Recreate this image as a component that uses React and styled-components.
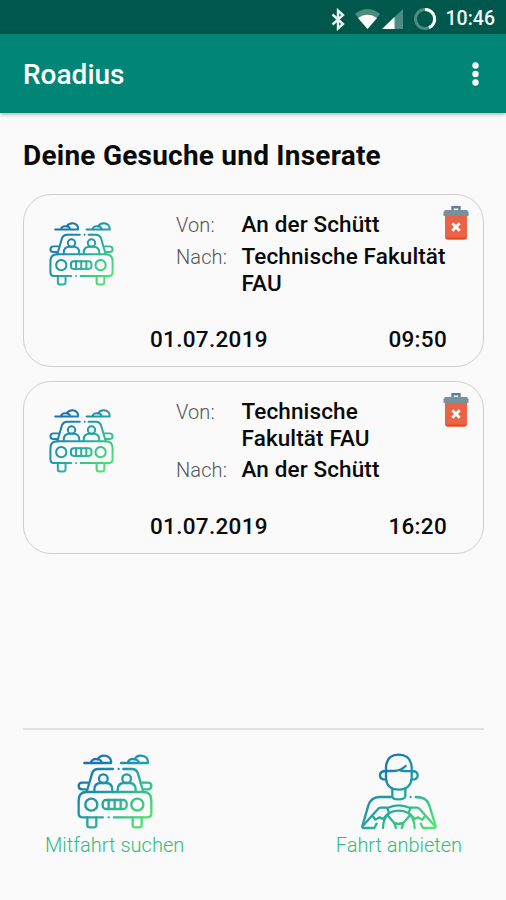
import styled, { createGlobalStyle } from 'styled-components';

const GlobalStyle = createGlobalStyle`
    * { box-sizing: border-box; }
    body {
        margin: 0;
        background: #fafafa;
        font-family: Roboto, "Liberation Sans", sans-serif;
        color: #0a0a0a;
    }
`

const Screen = styled.div`
    display: flex;
    flex-direction: column;
    width: 506px;
    height: 900px;
    overflow: hidden;
    background: #fafafa;
`

const StatusBar = styled.div`
    display: flex;
    flex: none;
    justify-content: flex-end;
    align-items: center;
    height: 34px;
    padding: 3px 11px 0 0;
    background: #00574b;
`

const Clock = styled.span`
    margin-left: 8px;
    font-size: 19.5px;
    font-weight: 500;
    line-height: 24px;
    color: #f2f7f6;
`

const Toolbar = styled.header`
    display: flex;
    flex: none;
    justify-content: space-between;
    align-items: center;
    height: 79px;
    padding: 1px 27px 0 23px;
    background: #008577;
    box-shadow: 0 1px 4px rgba(0, 0, 0, 0.35);
`

const AppName = styled.h1`
    margin: 2px 0 0;
    font-size: 28px;
    font-weight: 500;
    line-height: 34px;
    color: #fff;
`

const MenuButton = styled.button`
    display: flex;
    padding: 0;
    border: 0;
    background: none;
`

const Content = styled.main`
    display: flex;
    flex: 1;
    flex-direction: column;
    padding: 26px 22px 0 23px;
`

const Title = styled.h2`
    margin: 0 0 21px;
    font-size: 28px;
    font-weight: 700;
    line-height: 34px;
    letter-spacing: 0.23px;
    white-space: nowrap;
`

const Card = styled.article`
    display: flex;
    flex: none;
    height: 173px;
    margin-bottom: 14px;
    padding: 16px 14px 0 25px;
    border: 1.5px solid #cfcfcf;
    border-radius: 28px;
`

const CardIcon = styled.div`
    flex: none;
    width: 101px;
    padding-top: 10px;
`

const CardBody = styled.div`
    display: flex;
    flex: 1;
    flex-direction: column;
    justify-content: space-between;
    height: 142px;
`

const Route = styled.dl`
    display: grid;
    grid-template-columns: 65.5px 208px;
    align-items: baseline;
    row-gap: 4px;
    margin: 0 0 0 26px;
    line-height: 27px;
`

const Label = styled.dt`
    font-size: 20px;
    font-weight: 300;
    letter-spacing: 0.1px;
    color: #555;
`

const Place = styled.dd`
    margin: 0;
    font-size: 22.5px;
    font-weight: 500;
    letter-spacing: 0.12px;
    white-space: pre-line;
`

const Schedule = styled.div`
    display: flex;
    justify-content: space-between;
    padding-right: 22px;
    font-size: 22.5px;
    font-weight: 500;
    line-height: 28px;
    letter-spacing: 0.3px;
`

const DeleteButton = styled.button`
    align-self: flex-start;
    display: flex;
    flex: none;
    margin: -6px 0 0 -26px;
    padding: 0;
    border: 0;
    background: none;
`

const Actions = styled.nav`
    display: flex;
    justify-content: space-between;
    height: 172px;
    margin-top: auto;
    padding: 23px 22px 0;
    border-top: 2px solid #e0e0e0;
`

const Action = styled.button`
    display: flex;
    flex-direction: column;
    align-items: center;
    gap: 2px;
    padding: 0;
    border: 0;
    background: none;
    font-family: inherit;
    font-size: 20px;
    font-weight: 300;
    line-height: 28px;
    letter-spacing: ${(props) => props.$spacing};
    color: #2fbd80;
`

const LineIcon = styled.svg`
    display: block;
    width: ${(props) => props.$size}px;
    height: ${(props) => props.$size}px;
    overflow: visible;
    fill: none;
    stroke-width: 7;
    stroke-linecap: round;
    stroke-linejoin: round;
`

const Gradient = ({id, x1, y1, x2, y2}) => (
    <linearGradient id={id} gradientUnits="userSpaceOnUse" x1={x1} y1={y1} x2={x2} y2={y2}>
        <stop offset="0" stopColor="#1769b3" />
        <stop offset="0.5" stopColor="#20a0a5" />
        <stop offset="1" stopColor="#4fe36f" />
    </linearGradient>
)

const CarIcon = ({id, size}) => (
    <LineIcon $size={size} viewBox="36 24 228 228" stroke={`url(#${id})`}>
        <Gradient id={id} x1="60" y1="40" x2="240" y2="230" />
        <path d="M58 54H138C140 43 132 32 118 32C108 32 102 36 98 43C88 40 80 44 78 53M98 43C103 43 107 45 109 49" />
        <path d="M168 54H249C250 42 243 32 228 32C218 32 212 36 209 43C198 40 190 44 189 53M209 43C214 43 218 45 220 49" />
        <path d="M144 72H99Q87 72 82 83L65 141M175 72H201Q213 72 218 83L235 141M161 72h.1" />
        <circle cx="115" cy="101" r="13" />
        <circle cx="185" cy="101" r="13" />
        <path d="M88 141V134Q88 114 108 114H122Q142 114 142 134V141M158 141V134Q158 114 178 114H192Q212 114 212 134V141" />
        <path d="M68 113H52Q41 113 41 123Q41 133 52 133H63M232 113H248Q259 113 259 123Q259 133 248 133H237" />
        <path d="M114 217H52Q41 217 41 205V166Q41 141 65 141H235Q259 141 259 166V205Q259 217 247 217H147M131 217h.1" />
        <circle cx="79" cy="179" r="18" />
        <circle cx="217" cy="179" r="18" />
        <rect x="113" y="165" width="72" height="27" rx="10" />
        <path d="M131 165V192M149 165V192M167 165V192" />
        <path d="M67 217V239Q67 247 75 247H86Q94 247 94 239V217M203 217V239Q203 247 211 247H222Q230 247 230 239V217" />
    </LineIcon>
)

const DriverIcon = ({size}) => (
    <LineIcon $size={size} viewBox="32 24 228 228" stroke="url(#driver)">
        <Gradient id="driver" x1="75" y1="35" x2="240" y2="245" />
        <path d="M107 78V66Q109 29 145 29Q181 29 184 66V99Q181 134 145 134Q109 134 107 99V78H131Q153 76 166 63M148 75Q154 79 184 78" />
        <path d="M107 78Q89 78 89 91Q89 104 107 104M184 78Q202 78 202 91Q202 104 184 104" />
        <path d="M126 130V155Q128 163 145 163Q162 163 165 155V130" />
        <path d="M123 156H87Q62 157 54 181L36 243Q34 249 41 249H72L79 236M196 156Q230 156 237 181L256 243Q257 249 250 249H218L211 236M181 156h.1" />
        <path d="M38 242L83 192Q86 188 92 188H110L116 203L98 222L88 217L75 224L69 216M253 242L208 192Q205 188 199 188H181L175 203L193 222L203 217L216 224L222 216" />
        <path d="M111 189Q145 173 180 189M117 204Q145 190 174 204" />
        <path d="M98 249Q98 221 117 204M193 249Q193 221 174 204" />
        <path d="M112 211L131 233L145 237L160 233L179 211M131 233L137 249M160 233L154 249" />
    </LineIcon>
)

const TrashIcon = () => (
    <svg width="26" height="36" viewBox="0 0 26 36">
        <path d="M9.500 6V2.200H16.500V6" fill="none" stroke="#62818d" strokeWidth="2.400" />
        <path d="M2 5H24L25.500 7V11H.5V7Z" fill="#78929c" />
        <path d="M2 11H24V32Q24 34.500 21.500 34.500H4.500Q2 34.500 2 32Z" fill="#eb6346" />
        <path d="M2.500 32.500Q3 34.500 4.500 34.500H21.500Q23 34.500 23.500 32.500Z" fill="#e64a22" />
        <path d="M9.300 18.300L16.700 25.700M16.700 18.300L9.300 25.700" stroke="#fff" strokeWidth="2.800" />
    </svg>
)

const StatusIcons = () => (
    <svg width="108" height="24" viewBox="330 5 108 24">
        <path d="M332.500 12.500L343 22L338 26.500V8.500L343 13L332.500 22.500" fill="none" stroke="#e8f1ef" strokeWidth="2.400" />
        <path d="M355 12Q367.500 2 380 12L367.500 27Z" fill="#4e8b82" />
        <path d="M358 16Q367.500 9.500 377 16L367.500 27Z" fill="#fff" />
        <path d="M403 7V27H382Z" fill="#4e8b82" />
        <path d="M394.500 15V27H382Z" fill="#fff" />
        <circle cx="425" cy="17" r="9.500" fill="none" stroke="#4e8b82" strokeWidth="3" />
        <path d="M425 7.500A9.500 9.500 0 0 1 429 25.700" fill="none" stroke="#fff" strokeWidth="3" />
    </svg>
)

const rides = [
    { id: 'hin', from: 'An der Schütt', to: 'Technische Fakultät\nFAU', date: '01.07.2019', time: '09:50' },
    { id: 'rueck', from: 'Technische\nFakultät FAU', to: 'An der Schütt', date: '01.07.2019', time: '16:20' },
]

const RideCard = ({ride}) => (
    <Card>
        <CardIcon>
            <CarIcon id={`car-${ride.id}`} size={65} />
        </CardIcon>
        <CardBody>
            <Route>
                <Label>Von:</Label>
                <Place>{ride.from}</Place>
                <Label>Nach:</Label>
                <Place>{ride.to}</Place>
            </Route>
            <Schedule>
                <span>{ride.date}</span>
                <span>{ride.time}</span>
            </Schedule>
        </CardBody>
        <DeleteButton aria-label="Löschen">
            <TrashIcon />
        </DeleteButton>
    </Card>
)

const App = () => {
    return (
        <Screen>
            <GlobalStyle />
            <StatusBar>
                <StatusIcons />
                <Clock>10:46</Clock>
            </StatusBar>
            <Toolbar>
                <AppName>Roadius</AppName>
                <MenuButton aria-label="Menü">
                    <svg width="7" height="24" viewBox="0 0 7 24" fill="#fff">
                        <circle cx="3.500" cy="3.500" r="3.200" />
                        <circle cx="3.500" cy="12" r="3.200" />
                        <circle cx="3.500" cy="20.500" r="3.200" />
                    </svg>
                </MenuButton>
            </Toolbar>
            <Content>
                <Title>Deine Gesuche und Inserate</Title>
                {rides.map((ride) => <RideCard key={ride.id} ride={ride} />)}
                <Actions>
                    <Action $spacing="0.03px">
                        <CarIcon id="car-suchen" size={76} />
                        Mitfahrt suchen
                    </Action>
                    <Action $spacing="-0.03px">
                        <DriverIcon size={76} />
                        Fahrt anbieten
                    </Action>
                </Actions>
            </Content>
        </Screen>
    )
}

export default App;
